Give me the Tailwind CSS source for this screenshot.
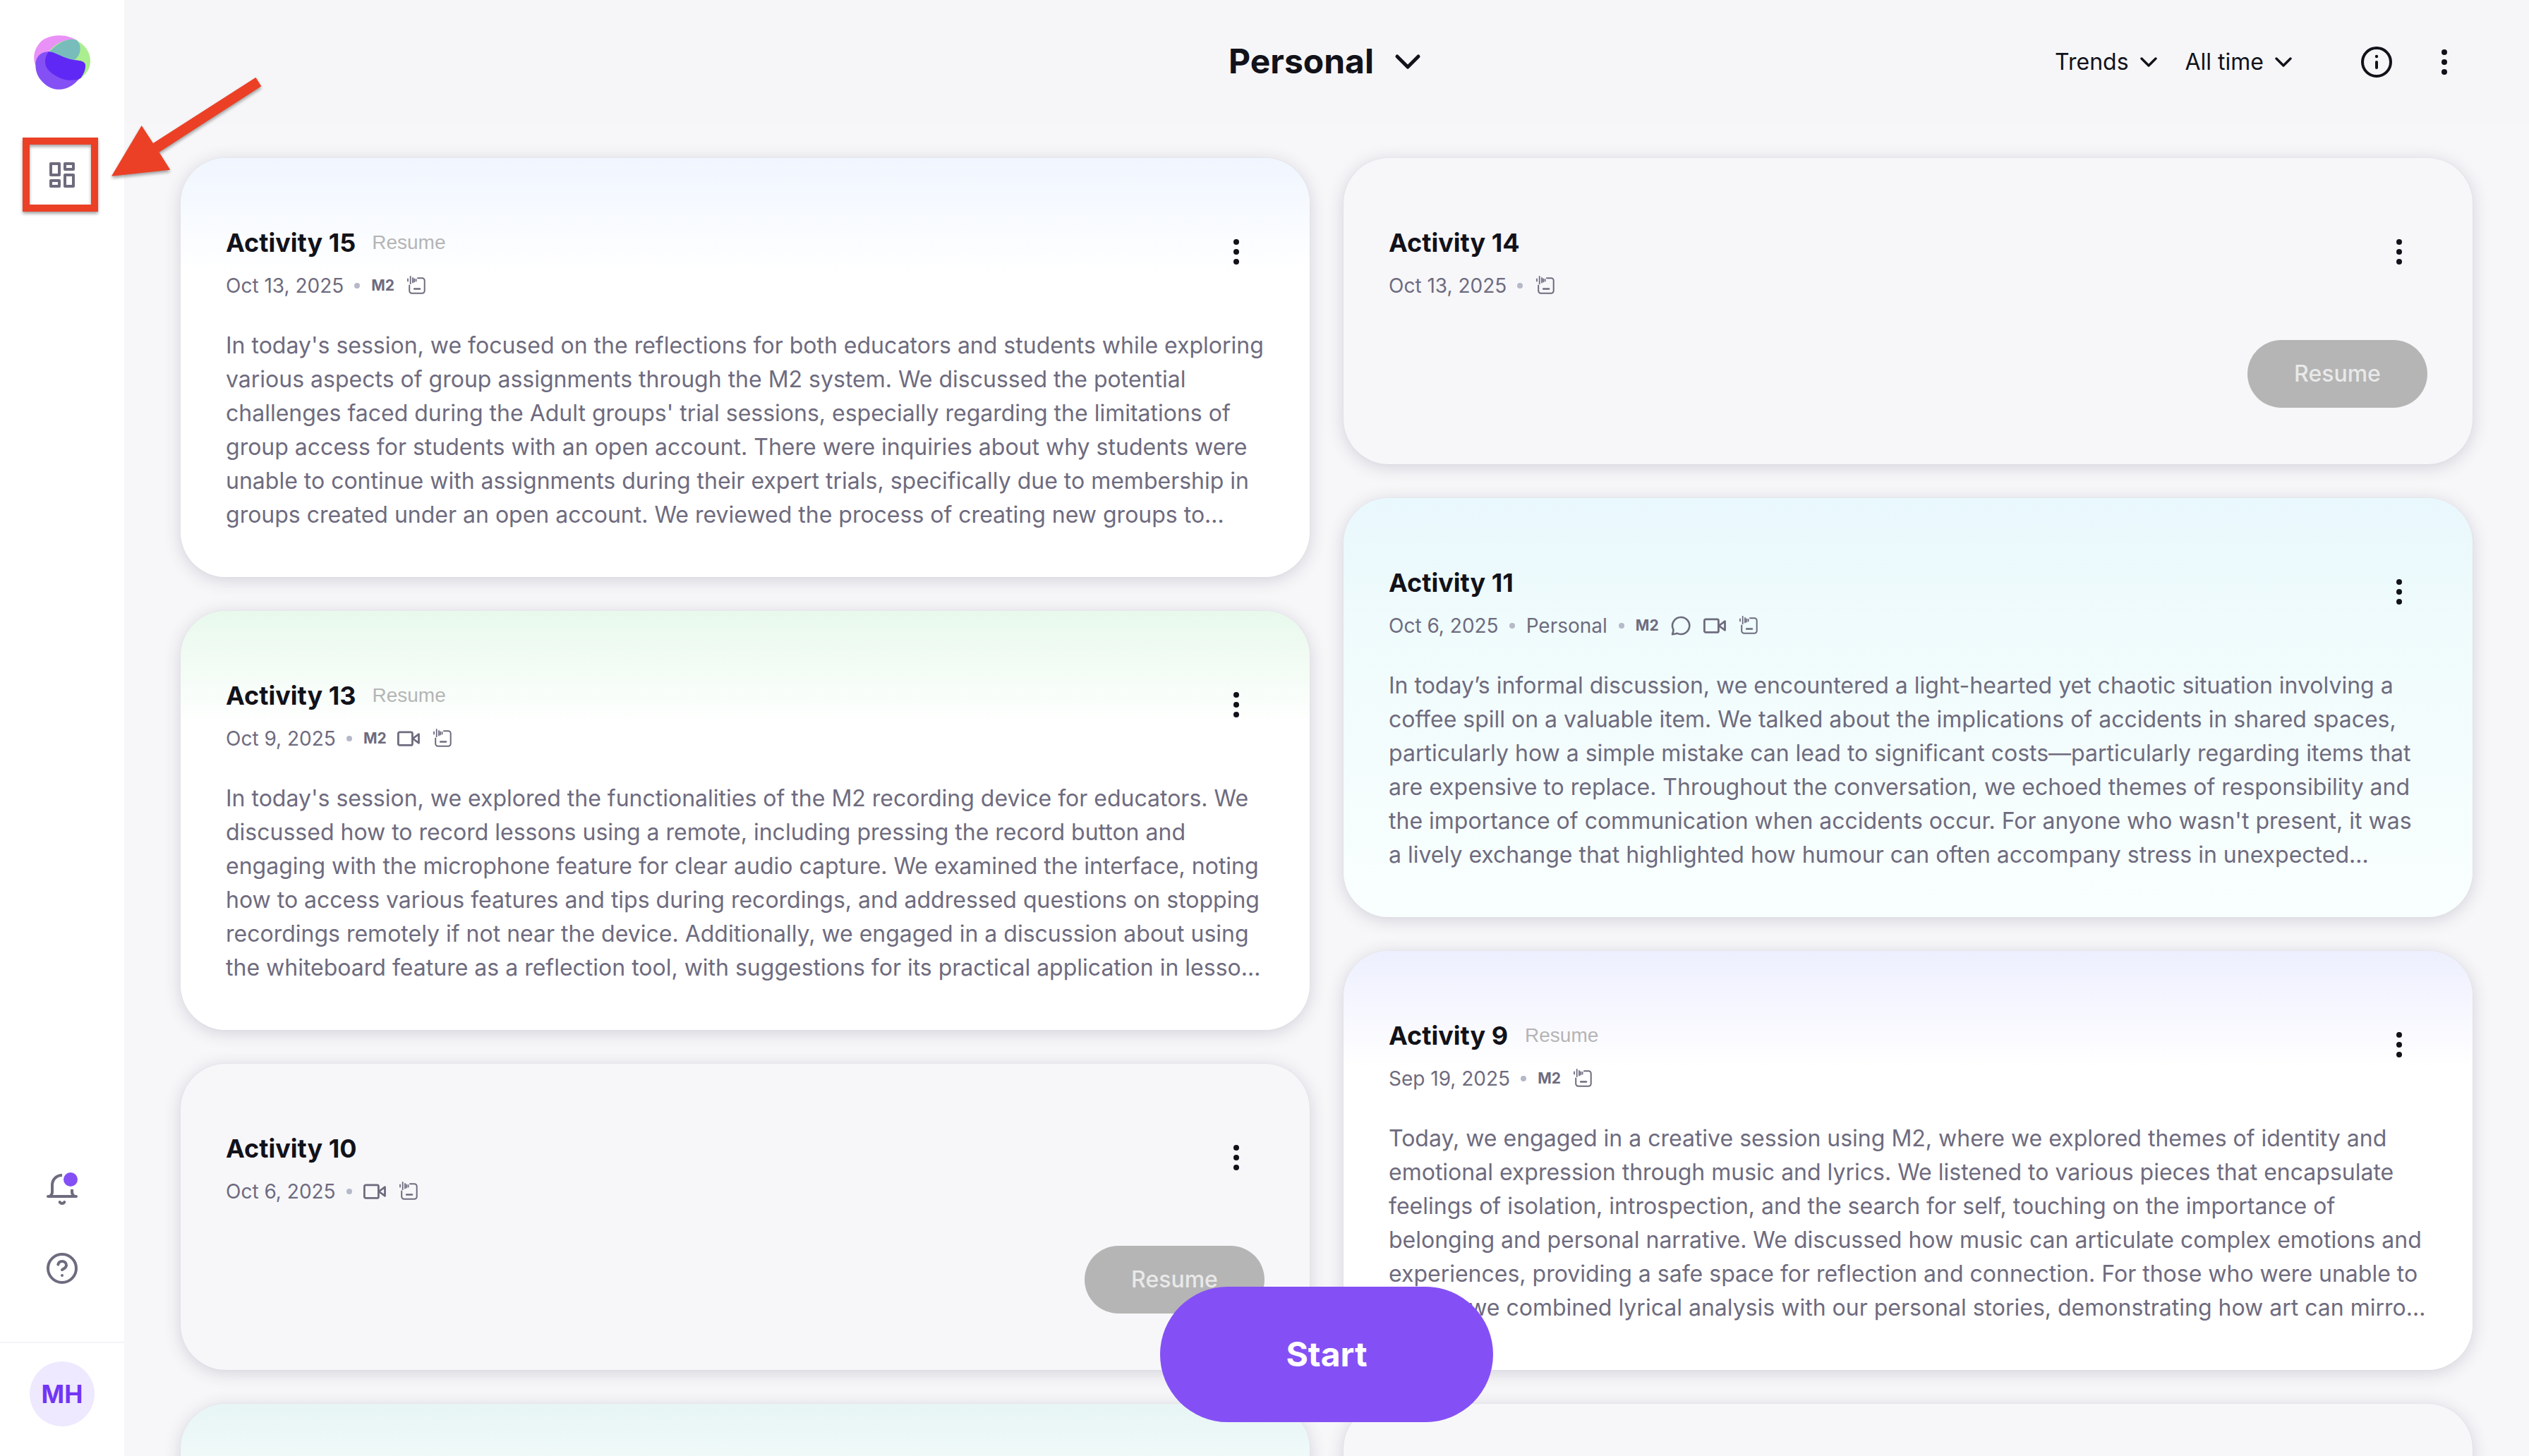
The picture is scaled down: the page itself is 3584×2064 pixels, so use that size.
<!DOCTYPE html>
<html lang="en">
<head>
<meta charset="utf-8">
<title>Personal</title>
<script src="https://cdn.jsdelivr.net/npm/@tailwindcss/browser@4"></script>
</head>
<body class="bg-[#f7f7f9] font-[Inter,sans-serif] text-[#12121a]">
    <!-- icons -->
    <svg class="hidden">
        <symbol id="dots" viewBox="0 0 48 48">
            <g fill="currentColor"><circle cx="24" cy="10" r="4"/><circle cx="24" cy="24" r="4"/><circle cx="24" cy="38" r="4"/></g>
        </symbol>
        <symbol id="chevron" viewBox="0 0 24 24">
            <path d="M2 7l10 10L22 7" fill="none" stroke="currentColor" stroke-width="3.4" stroke-linecap="round" stroke-linejoin="round"/>
        </symbol>
        <symbol id="note" viewBox="0 0 32 32">
            <g fill="none" stroke="currentColor" stroke-width="2" stroke-linecap="round">
                <path d="M6.200 15.500V23.200a3.500 3.500 0 0 0 3.500 3.500H24.200a3.500 3.500 0 0 0 3.500-3.500V8.700a3.500 3.500 0 0 0-3.500-3.500H18"/>
                <path d="M4 6.500v3M7.700 2.800v10.400M11 5v6.500M13.200 6.500v4M15.600 7v2.500" stroke-width="1.800"/>
                <path d="M13.200 20.500h7.800" stroke-width="2.600"/>
            </g>
        </symbol>
        <symbol id="video" viewBox="0 0 32 32">
            <g fill="none" stroke="currentColor" stroke-width="2.800" stroke-linejoin="round">
                <rect x="1.400" y="6.800" width="20" height="18.600" rx="2"/>
                <path d="M22 16l8.500-6.300v12.600z"/>
            </g>
        </symbol>
        <symbol id="chat" viewBox="0 0 32 32">
            <path d="M16.300 4a12 12 0 1 1-4.600 23.100c-1-.4-1.700-.2-2.700.1L4 28.300l1.300-4.600c.3-1 .3-1.600-.1-2.600A12 12 0 0 1 16.300 4z" fill="none" stroke="currentColor" stroke-width="2.600" stroke-linejoin="round"/>
        </symbol>
    </svg>

    <div class="flex w-[3584px] h-[2064px] overflow-hidden relative">
        <!-- sidebar -->
        <aside class="w-44 shrink-0 bg-white flex flex-col items-center text-[#6e6b7e]">
            <svg class="mt-[50px] w-20 h-[77px] shrink-0" viewBox="144 150 240 230">
                <path fill="#ea91f7" d="M150 275C138 240 146 205 175 175C200 153 235 150 255 150C285 150 310 160 328 172C340 185 342 198 341 212C338 235 328 245 316 255L200 300z"/>
                <path fill="#abee8f" d="M192 260C192 235 205 220 225 200C250 178 285 167 305 167C320 167 327 172 330 174C360 190 384 220 384 258C384 290 372 305 345 332C335 338 320 341 300 341C270 341 240 325 222 312C205 300 192 285 192 260z"/>
                <path fill="#78bdbb" d="M205 226C235 190 275 167 305 167C318 167 325 170 328 172C340 185 342 198 341 212C338 235 328 245 316 255L240 262z"/>
                <path fill="#8450f5" d="M151 275C151 245 170 219 205 219C240 221 265 247 316 255C345 257 363 262 363 278C363 305 345 330 320 352C300 370 275 380 250 380C225 380 205 370 188 355C165 335 151 310 151 275z"/>
                <path fill="#6028f5" d="M206 219C240 221 265 247 316 255C345 257 363 262 363 278C363 300 355 315 343 332C335 338 320 341 300 341C270 341 240 325 222 312C205 300 192 285 192 260C192 245 198 232 206 219z"/>
            </svg>
            <svg class="mt-[97px] size-12 shrink-0" viewBox="0 0 48 48" fill="none" stroke="currentColor" stroke-width="4" stroke-linejoin="round">
                <path d="M8 8h12v16H8zM28 8h12v8H28zM8 32h12v8H8zM28 24h12v16H28z"/>
            </svg>
            <div class="grow"></div>
            <svg class="size-12 shrink-0" viewBox="0 0 48 48" fill="none" stroke="currentColor" stroke-width="4" stroke-linecap="round" stroke-linejoin="round">
                <path stroke-linecap="butt" d="M24 6C16 6 10 12 10 20V30c0 3-1 4-3 5M38 26v4c0 3 1 4 3 5"/>
                <path d="M4 36H44M20.700 44c1.500 2.600 5.100 2.600 6.600 0"/>
                <circle cx="36" cy="12" r="10" fill="#8450f5" stroke="none"/>
            </svg>
            <svg class="mt-[66px] size-12 shrink-0" viewBox="0 0 48 48" fill="none" stroke="currentColor" stroke-width="4" stroke-linecap="round">
                <circle cx="24" cy="24" r="20"/>
                <path d="M18.300 18.500C19 15.600 21.200 14 24 14c3.400 0 6 2.300 6 5.500 0 4-3.600 4.600-6 6.500"/>
                <circle cx="24" cy="34" r="2" fill="currentColor" stroke="none"/>
            </svg>
            <div class="mt-20 w-full border-t-2 border-[#f5f5f8] pt-[26px] pb-[42px] flex justify-center">
                <div class="size-[92px] rounded-full bg-[#eee9fe] text-[#7335f5] text-[35px] font-bold flex items-center justify-center">MH</div>
            </div>
        </aside>

        <main class="grow flex flex-col">
            <header class="h-44 shrink-0 grid grid-cols-[1fr_auto_1fr] items-center bg-[#f6f6f8]">
                <div></div>
                <div class="flex items-center gap-6">
                    <h1 class="text-[48px] leading-[48px] font-bold pb-[3px]">Personal</h1>
                    <svg class="size-12" viewBox="0 0 48 48" fill="none" stroke="currentColor" stroke-width="5" stroke-linecap="round" stroke-linejoin="round"><path d="M9 16l15 15 15-15"/></svg>
                </div>
                <div class="flex items-center justify-end pr-24 text-[32px]">
                    <span>Trends</span>
                    <svg class="ml-4 size-6"><use href="#chevron"/></svg>
                    <span class="ml-10">All time</span>
                    <svg class="ml-4 size-6"><use href="#chevron"/></svg>
                    <svg class="ml-24 size-12" viewBox="0 0 48 48" fill="none" stroke="currentColor" stroke-width="4" stroke-linecap="round">
                        <circle cx="24" cy="24" r="20"/>
                        <path d="M24 24v8"/>
                        <circle cx="24" cy="16" r="2.200" fill="currentColor" stroke="none"/>
                    </svg>
                    <svg class="ml-12 size-12"><use href="#dots"/></svg>
                </div>
            </header>

            <div class="grid grid-cols-2 gap-12 pl-20 pr-20 pt-12">
                <!-- left column -->
                <div class="flex flex-col gap-12">
                    <article class="h-[594px] rounded-[64px] px-16 pt-[93px] bg-linear-to-b from-[#f0f6ff] to-white to-[165px] shadow-[0_4px_24px_rgba(50,40,80,0.18),0_0_2px_rgba(0,0,0,0.06)]">
                        <div class="flex justify-between">
                            <div class="pt-[3px]">
                                <div class="flex items-center gap-6 leading-[48px]">
                                    <h2 class="text-[36px] font-bold">Activity 15</h2>
                                    <span class="-ml-px font-['Liberation_Sans'] text-[28px] text-[#b5b5b5]">Resume</span>
                                </div>
                                <div class="mt-[21px] h-8 flex items-center gap-4 text-[28px] text-[#6e6b7e]">
                                    <span class="-mr-px">Oct 13, 2025</span>
                                    <i class="size-2 rounded-full bg-[#b5b9c8]"></i>
                                    <b class="w-8 text-[21px]">M2</b>
                                    <svg class="size-8"><use href="#note"/></svg>
                                </div>
                            </div>
                            <div class="size-20 flex items-center justify-center"><svg class="size-12"><use href="#dots"/></svg></div>
                        </div>
                        <p class="mt-[45px] text-[32px] leading-[48px] text-[#6e6b7e] whitespace-nowrap">In today's session, we focused on the reflections for both educators and students while exploring<br>
                        various aspects of group assignments through the M2 system. We discussed the potential<br>
                        challenges faced during the Adult groups' trial sessions, especially regarding the limitations of<br>
                        group access for students with an open account. There were inquiries about why students were<br>
                        unable to continue with assignments during their expert trials, specifically due to membership in<br>
                        groups created under an open account. We reviewed the process of creating new groups to…</p>
                    </article>

                    <article class="h-[594px] rounded-[64px] px-16 pt-[93px] bg-linear-to-b from-[#e8f9ec] to-white to-[165px] shadow-[0_4px_24px_rgba(50,40,80,0.18),0_0_2px_rgba(0,0,0,0.06)]">
                        <div class="flex justify-between">
                            <div class="pt-[3px]">
                                <div class="flex items-center gap-6 leading-[48px]">
                                    <h2 class="text-[36px] font-bold">Activity 13</h2>
                                    <span class="-ml-px font-['Liberation_Sans'] text-[28px] text-[#b5b5b5]">Resume</span>
                                </div>
                                <div class="mt-[21px] h-8 flex items-center gap-4 text-[28px] text-[#6e6b7e]">
                                    <span class="-mr-px">Oct 9, 2025</span>
                                    <i class="size-2 rounded-full bg-[#b5b9c8]"></i>
                                    <b class="w-8 text-[21px]">M2</b>
                                    <svg class="size-8"><use href="#video"/></svg>
                                    <svg class="size-8"><use href="#note"/></svg>
                                </div>
                            </div>
                            <div class="size-20 flex items-center justify-center"><svg class="size-12"><use href="#dots"/></svg></div>
                        </div>
                        <p class="mt-[45px] text-[32px] leading-[48px] text-[#6e6b7e] whitespace-nowrap">In today's session, we explored the functionalities of the M2 recording device for educators. We<br>
                        discussed how to record lessons using a remote, including pressing the record button and<br>
                        engaging with the microphone feature for clear audio capture. We examined the interface, noting<br>
                        how to access various features and tips during recordings, and addressed questions on stopping<br>
                        recordings remotely if not near the device. Additionally, we engaged in a discussion about using<br>
                        the whiteboard feature as a reflection tool, with suggestions for its practical application in lesso…</p>
                    </article>

                    <article class="h-[434px] rounded-[64px] px-16 pt-[93px] bg-[#f7f7fa] shadow-[0_4px_24px_rgba(50,40,80,0.18),0_0_2px_rgba(0,0,0,0.06)]">
                        <div class="flex justify-between">
                            <div class="pt-[3px]">
                                <h2 class="text-[36px] leading-[48px] font-bold">Activity 10</h2>
                                <div class="mt-[21px] h-8 flex items-center gap-4 text-[28px] text-[#6e6b7e]">
                                    <span class="-mr-px">Oct 6, 2025</span>
                                    <i class="size-2 rounded-full bg-[#b5b9c8]"></i>
                                    <svg class="size-8"><use href="#video"/></svg>
                                    <svg class="size-8"><use href="#note"/></svg>
                                </div>
                            </div>
                            <div class="size-20 flex items-center justify-center"><svg class="size-12"><use href="#dots"/></svg></div>
                        </div>
                        <div class="mt-[61px] flex justify-end">
                            <button class="w-[255px] h-24 rounded-full bg-[#b5b5b5] text-[#e9e9e9] text-[32px] font-medium">Resume</button>
                        </div>
                    </article>

                    <article class="h-[594px] rounded-[64px] bg-linear-to-b from-[#e7f5f5] to-[#f9fffd] to-[165px] shadow-[0_4px_24px_rgba(50,40,80,0.18),0_0_2px_rgba(0,0,0,0.06)]"></article>
                </div>

                <!-- right column -->
                <div class="flex flex-col gap-12">
                    <article class="h-[434px] rounded-[64px] px-16 pt-[93px] bg-[#f7f7fa] shadow-[0_4px_24px_rgba(50,40,80,0.18),0_0_2px_rgba(0,0,0,0.06)]">
                        <div class="flex justify-between">
                            <div class="pt-[3px]">
                                <h2 class="text-[36px] leading-[48px] font-bold">Activity 14</h2>
                                <div class="mt-[21px] h-8 flex items-center gap-4 text-[28px] text-[#6e6b7e]">
                                    <span class="-mr-px">Oct 13, 2025</span>
                                    <i class="size-2 rounded-full bg-[#b5b9c8]"></i>
                                    <svg class="size-8"><use href="#note"/></svg>
                                </div>
                            </div>
                            <div class="size-20 flex items-center justify-center"><svg class="size-12"><use href="#dots"/></svg></div>
                        </div>
                        <div class="mt-[61px] flex justify-end">
                            <button class="w-[255px] h-24 rounded-full bg-[#b5b5b5] text-[#e9e9e9] text-[32px] font-medium">Resume</button>
                        </div>
                    </article>

                    <article class="h-[594px] rounded-[64px] px-16 pt-[93px] bg-linear-to-b from-[#e9f8fd] via-[#effbfc] via-28% to-[#f9fffe] shadow-[0_4px_24px_rgba(50,40,80,0.18),0_0_2px_rgba(0,0,0,0.06)]">
                        <div class="flex justify-between">
                            <div class="pt-[3px]">
                                <h2 class="text-[36px] leading-[48px] font-bold">Activity 11</h2>
                                <div class="mt-[21px] h-8 flex items-center gap-4 text-[28px] text-[#6e6b7e]">
                                    <span class="-mr-px">Oct 6, 2025</span>
                                    <i class="size-2 rounded-full bg-[#b5b9c8]"></i>
                                    <span>Personal</span>
                                    <i class="size-2 rounded-full bg-[#b5b9c8]"></i>
                                    <b class="w-8 text-[21px]">M2</b>
                                    <svg class="size-8"><use href="#chat"/></svg>
                                    <svg class="size-8"><use href="#video"/></svg>
                                    <svg class="size-8"><use href="#note"/></svg>
                                </div>
                            </div>
                            <div class="size-20 flex items-center justify-center"><svg class="size-12"><use href="#dots"/></svg></div>
                        </div>
                        <p class="mt-[45px] text-[32px] leading-[48px] text-[#6e6b7e] whitespace-nowrap">In today’s informal discussion, we encountered a light-hearted yet chaotic situation involving a<br>
                        coffee spill on a valuable item. We talked about the implications of accidents in shared spaces,<br>
                        particularly how a simple mistake can lead to significant costs—particularly regarding items that<br>
                        are expensive to replace. Throughout the conversation, we echoed themes of responsibility and<br>
                        the importance of communication when accidents occur. For anyone who wasn't present, it was<br>
                        a lively exchange that highlighted how humour can often accompany stress in unexpected…</p>
                    </article>

                    <article class="h-[594px] rounded-[64px] px-16 pt-[93px] bg-linear-to-b from-[#edeffe] to-white to-[165px] shadow-[0_4px_24px_rgba(50,40,80,0.18),0_0_2px_rgba(0,0,0,0.06)]">
                        <div class="flex justify-between">
                            <div class="pt-[3px]">
                                <div class="flex items-center gap-6 leading-[48px]">
                                    <h2 class="text-[36px] font-bold">Activity 9</h2>
                                    <span class="font-['Liberation_Sans'] text-[28px] text-[#b5b5b5]">Resume</span>
                                </div>
                                <div class="mt-[21px] h-8 flex items-center gap-4 text-[28px] text-[#6e6b7e]">
                                    <span class="-mr-px">Sep 19, 2025</span>
                                    <i class="size-2 rounded-full bg-[#b5b9c8]"></i>
                                    <b class="w-8 text-[21px]">M2</b>
                                    <svg class="size-8"><use href="#note"/></svg>
                                </div>
                            </div>
                            <div class="size-20 flex items-center justify-center"><svg class="size-12"><use href="#dots"/></svg></div>
                        </div>
                        <p class="mt-[45px] text-[32px] leading-[48px] text-[#6e6b7e] whitespace-nowrap">Today, we engaged in a creative session using M2, where we explored themes of identity and<br>
                        emotional expression through music and lyrics. We listened to various pieces that encapsulate<br>
                        feelings of isolation, introspection, and the search for self, touching on the importance of<br>
                        belonging and personal narrative. We discussed how music can articulate complex emotions and<br>
                        experiences, providing a safe space for reflection and connection. For those who were unable to<br>
                        attend, we combined lyrical analysis with our personal stories, demonstrating how art can mirro…</p>
                    </article>

                    <article class="h-[434px] rounded-[64px] bg-[#f7f7fa] shadow-[0_4px_24px_rgba(50,40,80,0.18),0_0_2px_rgba(0,0,0,0.06)]"></article>
                </div>
            </div>
        </main>

        <!-- floating action -->
        <button class="absolute left-[1644px] bottom-12 w-[472px] h-48 rounded-full bg-[#8450f5] text-white text-[48px] font-bold">Start</button>

        <!-- callout: box and arrow on the dashboard link -->
        <div class="absolute left-8 top-[195px] w-[107px] h-[105px] border-10 border-[#eb4026] drop-shadow-[0_3px_2px_rgba(0,0,0,0.35)]"></div>
        <svg class="absolute left-[150px] top-[100px] w-[230px] h-[160px] overflow-visible drop-shadow-[0_3px_2px_rgba(0,0,0,0.35)]" viewBox="150 100 230 160">
            <path fill="#eb4026" d="M158 249.700L200.700 178 217 203 362.500 109.700 370.300 122.300 225.500 215.700 241.300 240.700z"/>
        </svg>
    </div>
</body>
</html>
